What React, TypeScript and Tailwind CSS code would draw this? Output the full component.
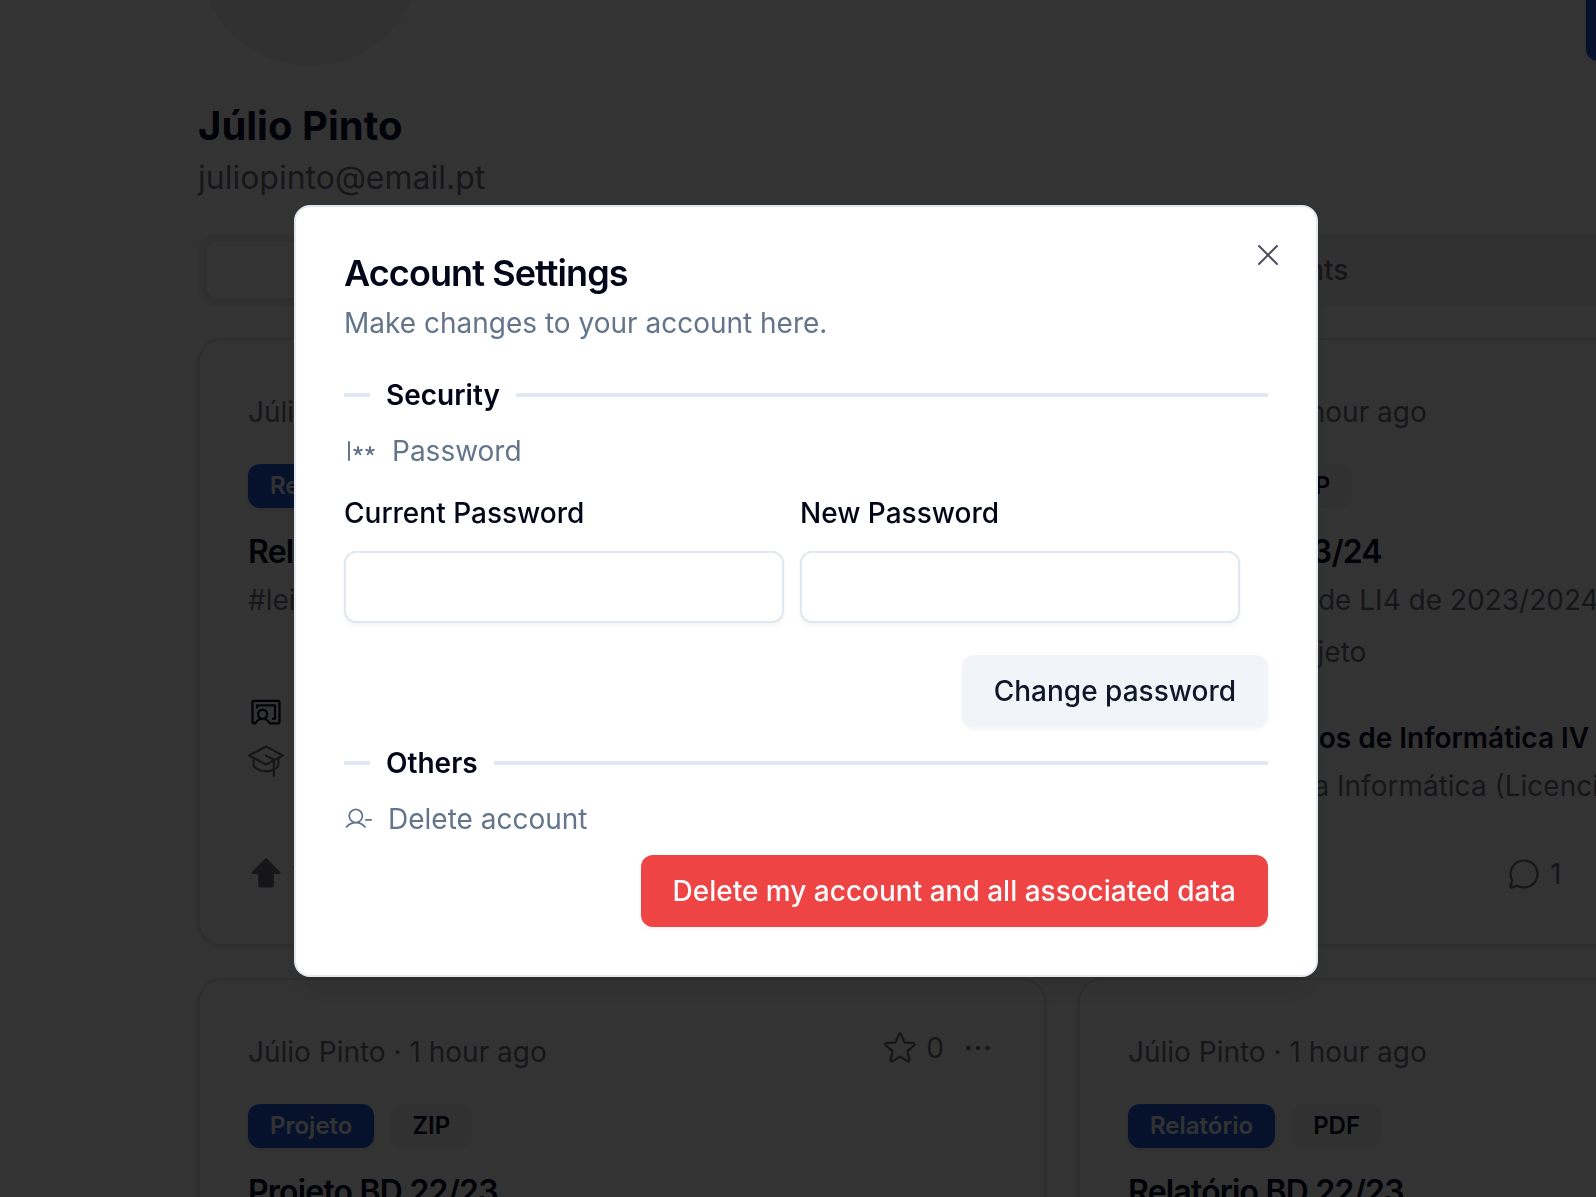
import type { ReactNode } from "react";
import {
  PiArrowFatDown,
  PiArrowFatUpFill,
  PiChalkboardTeacher,
  PiChatCircle,
  PiDotsThreeBold,
  PiGraduationCap,
  PiPassword,
  PiShareNetwork,
  PiStar,
  PiUserMinus,
  PiX,
} from "react-icons/pi";

type Post = {
  type: string;
  file: string;
  title: string;
  description?: string;
  tags: string;
  subject: string;
  degree: string;
  comments: number;
};

const posts: Post[] = [
  {
    type: "Relatório",
    file: "PDF",
    title: "Relatório LI4 23/24",
    tags: "#lei #li4",
    subject: "Laboratórios de Informática IV",
    degree: "Engenharia Informática (Licenciatura)",
    comments: 0,
  },
  {
    type: "Projeto",
    file: "ZIP",
    title: "Projeto LI4 23/24",
    description: "Projeto global de LI4 de 2023/2024",
    tags: "#lei #dss #projeto",
    subject: "Laboratórios de Informática IV",
    degree: "Engenharia Informática (Licenciatura)",
    comments: 1,
  },
  {
    type: "Projeto",
    file: "ZIP",
    title: "Projeto BD 22/23",
    tags: "#lei #bd",
    subject: "Bases de Dados",
    degree: "Engenharia Informática (Licenciatura)",
    comments: 0,
  },
  {
    type: "Relatório",
    file: "PDF",
    title: "Relatório BD 22/23",
    tags: "#lei #bd",
    subject: "Bases de Dados",
    degree: "Engenharia Informática (Licenciatura)",
    comments: 0,
  },
];

const tabs = ["Posts", "Starred", "Comments", "Drafts"];

function PostCard({ post }: { post: Post }) {
  return (
    <article className="min-h-[608px] flex flex-col justify-between rounded-3xl border-2 border-zinc-200 bg-white p-12 shadow-[0_2px_6px_rgba(0,0,0,0.1)]">
      <div>
        <header className="flex items-start justify-between text-[#71717f]">
          <span className="leading-12">Júlio Pinto · 1 hour ago</span>
          <div className="flex items-center gap-4">
            <button type="button" aria-label="Star" className="flex items-center gap-2">
              <PiStar className="size-9" />
              0
            </button>
            <button type="button" aria-label="More options">
              <PiDotsThreeBold className="size-9" />
            </button>
          </div>
        </header>
        <div className="mt-7 flex gap-4 text-2xl/8 font-semibold">
          <span className="rounded-xl bg-[#2056d8] px-[22px] py-1.5 text-slate-50 shadow-[0_2px_6px_rgba(0,0,0,0.1)]">
            {post.type}
          </span>
          <span className="rounded-xl bg-zinc-100 px-[22px] py-1.5">{post.file}</span>
        </div>
        <h2 className="mt-6 text-[32px]/10 font-semibold tracking-tight">{post.title}</h2>
        {post.description && <p className="mt-2 truncate text-[#71717f]">{post.description}</p>}
        <p className={post.description ? "mt-3 text-[#71717f]" : "mt-2 text-[#71717f]"}>{post.tags}</p>
      </div>

      <div className="leading-12">
        <div className="flex items-center gap-4 font-semibold">
          <PiChalkboardTeacher className="size-9 shrink-0" />
          {post.subject}
        </div>
        <div className="flex items-center gap-4 text-[#71717f]">
          <PiGraduationCap className="size-9 shrink-0" />
          {post.degree}
        </div>
      </div>

      <footer className="flex h-11 items-center justify-between text-[#71717f]">
        <div className="flex items-center gap-2">
          <button type="button" aria-label="Upvote">
            <PiArrowFatUpFill className="size-9" />
          </button>
          1
          <button type="button" aria-label="Downvote">
            <PiArrowFatDown className="size-9" />
          </button>
        </div>
        <button type="button" aria-label="Comments" className="flex items-center gap-2">
          <PiChatCircle className="size-9" />
          {post.comments}
        </button>
        <button type="button" aria-label="Share">
          <PiShareNetwork className="size-9" />
        </button>
      </footer>
    </article>
  );
}

function SectionTitle({ children }: { children: ReactNode }) {
  return (
    <div className="flex items-center gap-4">
      <span className="h-1 w-[26px] bg-slate-200" />
      <h3 className="font-semibold">{children}</h3>
      <span className="h-1 flex-1 bg-slate-200" />
    </div>
  );
}

function PasswordField({ id, label }: { id: string; label: string }) {
  return (
    <div className="w-[440px]">
      <label htmlFor={id} className="block font-medium leading-[52px]">
        {label}
      </label>
      <input
        id={id}
        type="password"
        className="mt-3 block h-18 w-full rounded-xl border-2 border-slate-200 bg-white px-6 shadow-[0_2px_4px_rgba(0,0,0,0.05)]"
      />
    </div>
  );
}

function AccountSettings() {
  return (
    <div className="fixed inset-0 flex items-center justify-center bg-black/80 pb-[15px] pl-4">
      <div
        role="dialog"
        aria-modal="true"
        aria-labelledby="settings-title"
        className="relative w-full max-w-5xl rounded-2xl border-2 border-slate-200 bg-white p-12 text-slate-950 shadow-[0_20px_30px_-6px_rgba(0,0,0,0.1),0_8px_12px_-8px_rgba(0,0,0,0.1)]"
      >
        <button type="button" aria-label="Close" className="absolute top-8 right-8 opacity-70">
          <PiX className="size-8" />
        </button>

        <h2 id="settings-title" className="text-4xl/9 font-semibold tracking-tight">
          Account Settings
        </h2>
        <p className="mt-3 text-[#64748b]">Make changes to your account here.</p>

        <div className="mt-8 flex flex-col gap-4">
          <SectionTitle>Security</SectionTitle>
          <div className="flex items-center gap-4 text-[#64748b]">
            <PiPassword className="size-8" />
            Password
          </div>
          <form className="flex flex-col gap-8">
            <div className="flex gap-4">
              <PasswordField id="current-password" label="Current Password" />
              <PasswordField id="new-password" label="New Password" />
            </div>
            <button
              type="button"
              className="h-18 self-end rounded-xl bg-slate-100 px-8 font-medium text-slate-900 shadow-[0_2px_4px_rgba(0,0,0,0.05)]"
            >
              Change password
            </button>
          </form>

          <SectionTitle>Others</SectionTitle>
          <div className="flex items-center gap-4 text-[#64748b]">
            <PiUserMinus className="size-7" />
            Delete account
          </div>
          <button
            type="button"
            className="h-18 self-end rounded-xl bg-[#ef4444] px-8 font-medium text-slate-50 shadow-[0_2px_4px_rgba(0,0,0,0.05)]"
          >
            Delete my account and all associated data
          </button>
        </div>
      </div>
    </div>
  );
}

export default function App() {
  return (
    <div className="h-screen overflow-hidden bg-white font-['Inter',sans-serif] text-[28px]/10 text-[#0a0e2e]">
      {/* Profile page, scrolled down a little and wider than the window */}
      <main className="-mt-[158px] -mr-[330px] ml-[198px]">
        <div className="flex items-end justify-between">
          <div className="size-56 rounded-full bg-zinc-100" />
          <button
            type="button"
            className="mb-[5px] h-18 w-[340px] rounded-xl bg-[#2056d8] font-medium text-slate-50 shadow-[0_2px_6px_rgba(0,0,0,0.1)]"
          >
            Edit profile
          </button>
        </div>
        <h1 className="mt-8 text-[40px]/14 font-bold">Júlio Pinto</h1>
        <p className="text-[32px]/12 text-[#71717f]">juliopinto@email.pt</p>

        <div className="mt-8 grid grid-cols-4 rounded-2xl bg-zinc-100 p-2 font-medium text-[#71717f]">
          {tabs.map((tab, i) => (
            <button
              key={tab}
              type="button"
              className={
                i === 0
                  ? "h-14 rounded-xl bg-white text-[#0a0e2e] shadow-[0_2px_6px_rgba(0,0,0,0.1)]"
                  : "h-14 rounded-xl"
              }
            >
              {tab}
            </button>
          ))}
        </div>

        <div className="mt-8 grid grid-cols-2 gap-8">
          {posts.map((post) => (
            <PostCard key={post.title} post={post} />
          ))}
        </div>
      </main>

      <AccountSettings />
    </div>
  );
}
